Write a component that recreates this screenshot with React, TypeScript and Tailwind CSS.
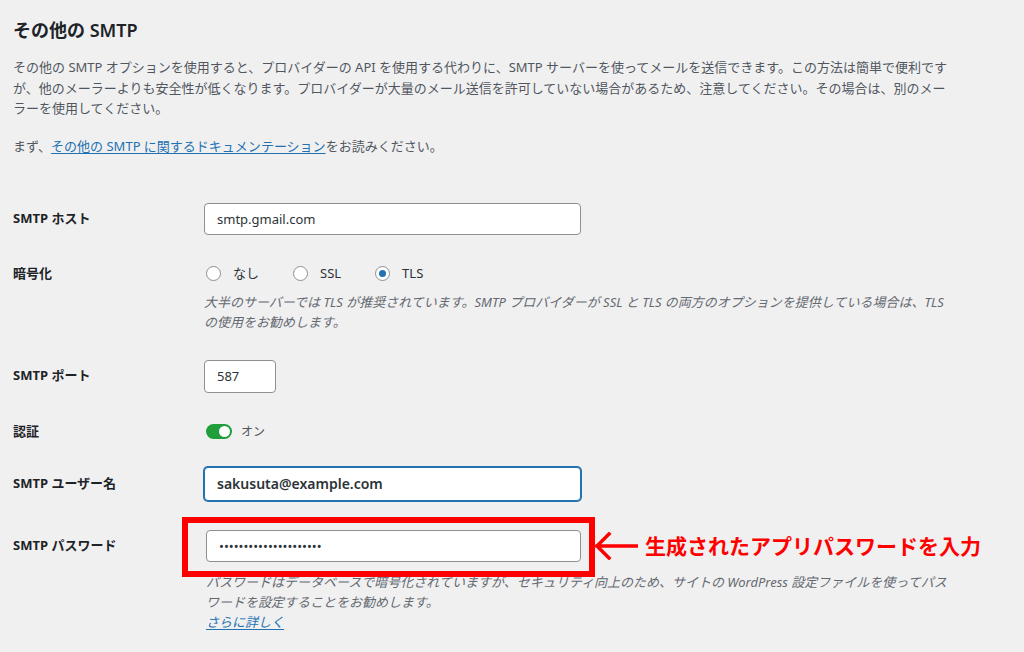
import React from "react"

const font = {
  fontFamily: '"Noto Sans", "Noto Sans CJK JP", sans-serif',
}

const Radio = ({ label, checked }: { label: string; checked?: boolean }) => (
  <label className="flex items-center">
    <span className="flex h-[15px] w-[15px] items-center justify-center rounded-full border border-[#8c8f94] bg-white">
      {checked && <span className="h-[7px] w-[7px] rounded-full bg-[#2271b1]" />}
    </span>
    <span className="ml-[12px] text-[13px] text-[#2c3338]">{label}</span>
  </label>
)

const Label = ({ children }: { children: React.ReactNode }) => (
  <div className="text-[13px] font-bold text-[#1d2327]">{children}</div>
)

export default function App() {
  return (
    <div
      className="min-h-[652px] w-[1024px] overflow-hidden bg-[#f0f0f1] pl-[13px] pt-[17px]"
      style={font}
    >
      <h2 className="text-[18px] leading-[26px] font-semibold text-[#1d2327]">
        その他の SMTP
      </h2>

      <p className="mt-[14px] text-[13px] leading-[20.5px] text-[#50575e]">
        その他の SMTP オプションを使用すると、プロバイダーの API
        を使用する代わりに、SMTP サーバーを使ってメールを送信できます。この方法は簡単で便利です
        <br />
        が、他のメーラーよりも安全性が低くなります。プロバイダーが大量のメール送信を許可していない場合があるため、注意してください。その場合は、別のメー
        <br />
        ラーを使用してください。
      </p>

      <p className="mt-[17px] text-[13px] leading-[20px] text-[#50575e]">
        まず、
        <a className="text-[#2271b1] underline underline-offset-2">
          その他の SMTP に関するドキュメンテーション
        </a>
        をお読みください。
      </p>

      {/* SMTP host */}
      <div className="mt-[47px] grid grid-cols-[191px_1fr] items-center">
        <Label>SMTP ホスト</Label>
        <input
          readOnly
          value="smtp.gmail.com"
          className="h-[32px] w-[377px] rounded-[4px] border border-[#8c8f94] bg-white px-[12px] text-[13px] text-[#2c3338] outline-none"
        />
      </div>

      {/* Encryption */}
      <div className="mt-[29px] grid grid-cols-[191px_1fr]">
        <div className="leading-[18px]">
          <Label>暗号化</Label>
        </div>
        <div>
          <div className="flex h-[20px] items-center gap-[34px] pl-[2px]">
            <Radio label="なし" />
            <Radio label="SSL" />
            <Radio label="TLS" checked />
          </div>
          <p className="mt-[8px] text-[13px] leading-[20px] text-[#646970] italic">
            大半のサーバーでは TLS が推奨されています。SMTP プロバイダーが SSL と TLS
            の両方のオプションを提供している場合は、TLS
            <br />
            の使用をお勧めします。
          </p>
        </div>
      </div>

      {/* Port */}
      <div className="mt-[28px] grid grid-cols-[191px_1fr] items-center">
        <Label>SMTP ポート</Label>
        <input
          readOnly
          value="587"
          className="h-[33px] w-[72px] rounded-[4px] border border-[#8c8f94] bg-white px-[12px] text-[13px] text-[#2c3338] outline-none"
        />
      </div>

      {/* Auth */}
      <div className="mt-[29px] grid h-[20px] grid-cols-[191px_1fr] items-center">
        <Label>認証</Label>
        <div className="flex items-center pl-[2px]">
          <span className="flex h-[15px] w-[26px] items-center justify-end rounded-full bg-[#1f9e3a] pr-[2px]">
            <span className="h-[11px] w-[11px] rounded-full bg-white" />
          </span>
          <span className="ml-[9px] text-[12px] text-[#50575e]">オン</span>
        </div>
      </div>

      {/* Username */}
      <div className="mt-[25px] grid grid-cols-[191px_1fr] items-center">
        <Label>SMTP ユーザー名</Label>
        <input
          readOnly
          value="sakusuta@example.com"
          className="h-[34px] w-[377px] rounded-[4px] border border-[#2271b1] bg-white px-[12px] text-[14px] font-semibold text-[#2c3338] shadow-[0_0_0_1px_#2271b1] outline-none"
        />
      </div>

      {/* Password */}
      <div className="mt-[29px] grid grid-cols-[191px_1fr]">
        <div className="flex h-[32px] items-center">
          <Label>SMTP パスワード</Label>
        </div>
        <div className="pl-[2px]">
          <div className="relative w-[375px]">
            <input
              readOnly
              type="password"
              value="sakusutapassword12345"
              className="h-[32px] w-[375px] rounded-[4px] border border-[#8c8f94] bg-white px-[12px] text-[13px] text-[#2c3338] outline-none"
            />
            {/* annotation */}
            <div className="pointer-events-none absolute top-[-13px] right-[-14px] bottom-[-15px] left-[-24px] border-[6px] border-[#ff0000]" />
            <div className="pointer-events-none absolute top-[2px] left-[388px] flex items-center">
              <svg width="44" height="28" viewBox="0 0 44 28">
                <path
                  d="M43 14H3M15 2L3 14L15 26"
                  fill="none"
                  stroke="#ff0000"
                  strokeWidth="3.5"
                  strokeLinecap="square"
                />
              </svg>
              <span className="ml-[7px] text-[21px] leading-[28px] font-bold whitespace-nowrap text-[#ff0000]">
                生成されたアプリパスワードを入力
              </span>
            </div>
          </div>
          <p className="mt-[10px] text-[13px] leading-[20px] text-[#646970] italic">
            パスワードはデータベースで暗号化されていますが、セキュリティ向上のため、サイトの
            WordPress 設定ファイルを使ってパス
            <br />
            ワードを設定することをお勧めします。
            <br />
            <a className="text-[#2271b1] underline underline-offset-2">さらに詳しく</a>
          </p>
        </div>
      </div>
    </div>
  )
}
